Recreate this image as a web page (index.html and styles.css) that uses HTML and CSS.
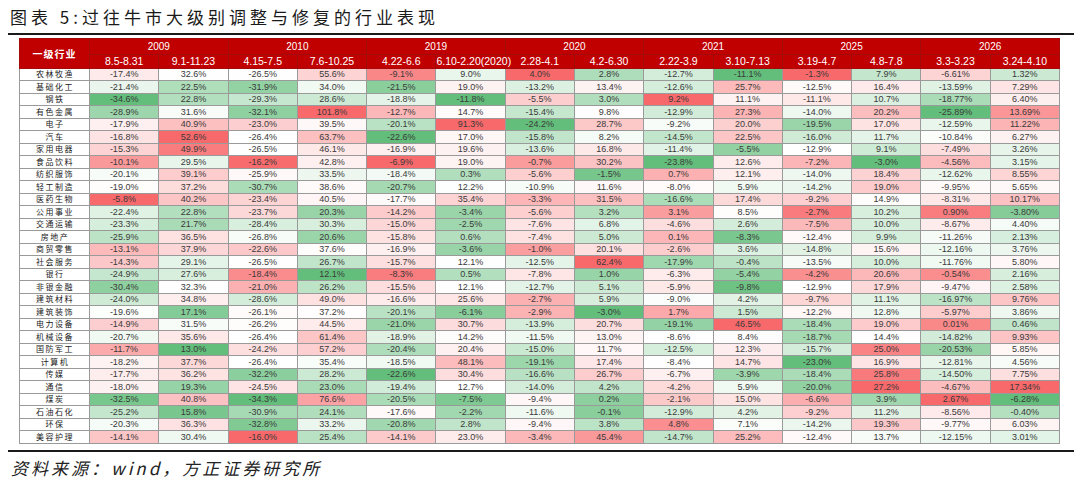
FILE: index.html
```html
<!DOCTYPE html>
<html lang="zh-CN">
<head>
<meta charset="utf-8">
<title>图表 5:过往牛市大级别调整与修复的行业表现</title>
<link rel="stylesheet" href="styles.css">
</head>
<body>
<div class="page">
  <h1 class="title">图表 5:过往牛市大级别调整与修复的行业表现</h1>
  <div class="rule"></div>
  <table class="perf">
    <colgroup>
      <col class="c-name">
      <col span="14">
    </colgroup>
    <thead>
      <tr class="h-year">
        <th rowspan="2" class="h-name">一级行业</th>
        <th colspan="2">2009</th>
        <th colspan="2">2010</th>
        <th colspan="2">2019</th>
        <th colspan="2">2020</th>
        <th colspan="2">2021</th>
        <th colspan="2">2025</th>
        <th colspan="2">2026</th>
      </tr>
      <tr class="h-range">
        <th>8.5-8.31</th><th>9.1-11.23</th><th>4.15-7.5</th><th>7.6-10.25</th>
        <th>4.22-6.6</th><th>6.10-2.20(2020)</th><th>2.28-4.1</th><th>4.2-6.30</th>
        <th>2.22-3.9</th><th>3.10-7.13</th><th>3.19-4.7</th><th>4.8-7.8</th>
        <th>3.3-3.23</th><th>3.24-4.10</th>
      </tr>
    </thead>
    <tbody>
      <tr><td>农林牧渔</td><td>-17.4%</td><td>32.6%</td><td>-26.5%</td><td>55.6%</td><td>-9.1%</td><td>9.0%</td><td>4.0%</td><td>2.8%</td><td>-12.7%</td><td>-11.1%</td><td>-1.3%</td><td>7.9%</td><td>-6.61%</td><td>1.32%</td></tr>
      <tr><td>基础化工</td><td>-21.4%</td><td>22.5%</td><td>-31.9%</td><td>34.0%</td><td>-21.5%</td><td>19.0%</td><td>-13.2%</td><td>13.4%</td><td>-12.6%</td><td>25.7%</td><td>-12.5%</td><td>16.4%</td><td>-13.59%</td><td>7.29%</td></tr>
      <tr><td>钢铁</td><td>-34.6%</td><td>22.8%</td><td>-29.3%</td><td>28.6%</td><td>-18.8%</td><td>-11.8%</td><td>-5.5%</td><td>3.0%</td><td>9.2%</td><td>11.1%</td><td>-11.1%</td><td>10.7%</td><td>-18.77%</td><td>6.40%</td></tr>
      <tr><td>有色金属</td><td>-28.9%</td><td>31.6%</td><td>-32.1%</td><td>101.8%</td><td>-12.7%</td><td>14.7%</td><td>-15.4%</td><td>9.8%</td><td>-12.9%</td><td>27.3%</td><td>-14.0%</td><td>20.2%</td><td>-25.89%</td><td>13.69%</td></tr>
      <tr><td>电子</td><td>-17.9%</td><td>40.9%</td><td>-23.0%</td><td>39.5%</td><td>-20.1%</td><td>91.3%</td><td>-24.2%</td><td>28.7%</td><td>-9.2%</td><td>20.0%</td><td>-19.5%</td><td>17.0%</td><td>-12.59%</td><td>11.22%</td></tr>
      <tr><td>汽车</td><td>-16.8%</td><td>52.6%</td><td>-26.4%</td><td>63.7%</td><td>-22.6%</td><td>17.0%</td><td>-15.8%</td><td>8.2%</td><td>-14.5%</td><td>22.5%</td><td>-16.0%</td><td>11.7%</td><td>-10.84%</td><td>6.27%</td></tr>
      <tr><td>家用电器</td><td>-15.3%</td><td>49.9%</td><td>-26.5%</td><td>46.1%</td><td>-16.9%</td><td>19.6%</td><td>-13.6%</td><td>16.8%</td><td>-11.4%</td><td>-5.5%</td><td>-12.9%</td><td>9.1%</td><td>-7.49%</td><td>3.26%</td></tr>
      <tr><td>食品饮料</td><td>-10.1%</td><td>29.5%</td><td>-16.2%</td><td>42.8%</td><td>-6.9%</td><td>19.0%</td><td>-0.7%</td><td>30.2%</td><td>-23.8%</td><td>12.6%</td><td>-7.2%</td><td>-3.0%</td><td>-4.56%</td><td>3.15%</td></tr>
      <tr><td>纺织服饰</td><td>-20.1%</td><td>39.1%</td><td>-25.9%</td><td>33.5%</td><td>-18.4%</td><td>0.3%</td><td>-5.6%</td><td>-1.5%</td><td>0.7%</td><td>12.1%</td><td>-14.0%</td><td>18.4%</td><td>-12.62%</td><td>8.55%</td></tr>
      <tr><td>轻工制造</td><td>-19.0%</td><td>37.2%</td><td>-30.7%</td><td>38.6%</td><td>-20.7%</td><td>12.2%</td><td>-10.9%</td><td>11.6%</td><td>-8.0%</td><td>5.9%</td><td>-14.2%</td><td>19.0%</td><td>-9.95%</td><td>5.65%</td></tr>
      <tr><td>医药生物</td><td>-5.8%</td><td>40.2%</td><td>-23.4%</td><td>40.5%</td><td>-17.7%</td><td>35.4%</td><td>-3.3%</td><td>31.5%</td><td>-16.6%</td><td>17.4%</td><td>-9.2%</td><td>14.9%</td><td>-8.31%</td><td>10.17%</td></tr>
      <tr><td>公用事业</td><td>-22.4%</td><td>22.8%</td><td>-23.7%</td><td>20.3%</td><td>-14.2%</td><td>-3.4%</td><td>-5.6%</td><td>3.2%</td><td>3.1%</td><td>8.5%</td><td>-2.7%</td><td>10.2%</td><td>0.90%</td><td>-3.80%</td></tr>
      <tr><td>交通运输</td><td>-23.3%</td><td>21.7%</td><td>-28.4%</td><td>30.3%</td><td>-15.0%</td><td>-2.5%</td><td>-7.6%</td><td>6.8%</td><td>-4.6%</td><td>2.6%</td><td>-7.5%</td><td>10.0%</td><td>-8.67%</td><td>4.40%</td></tr>
      <tr><td>房地产</td><td>-25.9%</td><td>36.5%</td><td>-26.8%</td><td>20.6%</td><td>-15.8%</td><td>0.6%</td><td>-7.4%</td><td>5.0%</td><td>0.1%</td><td>-8.3%</td><td>-12.4%</td><td>9.9%</td><td>-11.26%</td><td>2.13%</td></tr>
      <tr><td>商贸零售</td><td>-13.1%</td><td>37.9%</td><td>-22.6%</td><td>37.6%</td><td>-16.9%</td><td>-3.6%</td><td>-1.0%</td><td>20.1%</td><td>-2.6%</td><td>3.6%</td><td>-14.8%</td><td>15.6%</td><td>-12.16%</td><td>3.76%</td></tr>
      <tr><td>社会服务</td><td>-14.3%</td><td>29.1%</td><td>-26.5%</td><td>26.7%</td><td>-15.7%</td><td>12.1%</td><td>-12.5%</td><td>62.4%</td><td>-17.9%</td><td>-0.4%</td><td>-13.5%</td><td>10.0%</td><td>-11.76%</td><td>5.80%</td></tr>
      <tr><td>银行</td><td>-24.9%</td><td>27.6%</td><td>-18.4%</td><td>12.1%</td><td>-8.3%</td><td>0.5%</td><td>-7.8%</td><td>1.0%</td><td>-6.3%</td><td>-5.4%</td><td>-4.2%</td><td>20.6%</td><td>-0.54%</td><td>2.16%</td></tr>
      <tr><td>非银金融</td><td>-30.4%</td><td>32.3%</td><td>-21.0%</td><td>26.2%</td><td>-15.5%</td><td>12.1%</td><td>-12.7%</td><td>5.1%</td><td>-5.9%</td><td>-9.8%</td><td>-12.9%</td><td>17.9%</td><td>-9.47%</td><td>2.58%</td></tr>
      <tr><td>建筑材料</td><td>-24.0%</td><td>34.8%</td><td>-28.6%</td><td>49.0%</td><td>-16.6%</td><td>25.6%</td><td>-2.7%</td><td>5.9%</td><td>-9.0%</td><td>4.2%</td><td>-9.7%</td><td>11.1%</td><td>-16.97%</td><td>9.76%</td></tr>
      <tr><td>建筑装饰</td><td>-19.6%</td><td>17.1%</td><td>-26.1%</td><td>37.2%</td><td>-20.1%</td><td>-6.1%</td><td>-2.9%</td><td>-3.0%</td><td>1.7%</td><td>1.5%</td><td>-12.2%</td><td>12.8%</td><td>-5.97%</td><td>3.86%</td></tr>
      <tr><td>电力设备</td><td>-14.9%</td><td>31.5%</td><td>-26.2%</td><td>44.5%</td><td>-21.0%</td><td>30.7%</td><td>-13.9%</td><td>20.7%</td><td>-19.1%</td><td>46.5%</td><td>-18.4%</td><td>19.0%</td><td>0.01%</td><td>0.46%</td></tr>
      <tr><td>机械设备</td><td>-20.7%</td><td>35.6%</td><td>-26.4%</td><td>61.4%</td><td>-18.9%</td><td>14.2%</td><td>-11.5%</td><td>13.0%</td><td>-8.6%</td><td>8.4%</td><td>-18.7%</td><td>14.4%</td><td>-14.82%</td><td>9.93%</td></tr>
      <tr><td>国防军工</td><td>-11.7%</td><td>13.0%</td><td>-24.2%</td><td>57.2%</td><td>-20.4%</td><td>20.4%</td><td>-15.0%</td><td>11.7%</td><td>-12.5%</td><td>12.3%</td><td>-15.7%</td><td>25.0%</td><td>-20.53%</td><td>5.85%</td></tr>
      <tr><td>计算机</td><td>-18.2%</td><td>37.7%</td><td>-26.4%</td><td>35.4%</td><td>-18.5%</td><td>48.1%</td><td>-19.1%</td><td>17.4%</td><td>-8.4%</td><td>14.7%</td><td>-23.0%</td><td>16.9%</td><td>-12.81%</td><td>4.56%</td></tr>
      <tr><td>传媒</td><td>-17.7%</td><td>36.2%</td><td>-32.2%</td><td>28.2%</td><td>-22.6%</td><td>30.4%</td><td>-16.6%</td><td>26.7%</td><td>-6.7%</td><td>-3.9%</td><td>-18.4%</td><td>25.8%</td><td>-14.50%</td><td>7.75%</td></tr>
      <tr><td>通信</td><td>-18.0%</td><td>19.3%</td><td>-24.5%</td><td>23.0%</td><td>-19.4%</td><td>12.7%</td><td>-14.0%</td><td>4.2%</td><td>-4.2%</td><td>5.9%</td><td>-20.0%</td><td>27.2%</td><td>-4.67%</td><td>17.34%</td></tr>
      <tr><td>煤炭</td><td>-32.5%</td><td>40.8%</td><td>-34.3%</td><td>76.6%</td><td>-20.5%</td><td>-7.5%</td><td>-9.4%</td><td>0.2%</td><td>-2.1%</td><td>15.0%</td><td>-6.6%</td><td>3.9%</td><td>2.67%</td><td>-6.28%</td></tr>
      <tr><td>石油石化</td><td>-25.2%</td><td>15.8%</td><td>-30.9%</td><td>24.1%</td><td>-17.6%</td><td>-2.2%</td><td>-11.6%</td><td>-0.1%</td><td>-12.9%</td><td>4.2%</td><td>-9.2%</td><td>11.2%</td><td>-8.56%</td><td>-0.40%</td></tr>
      <tr><td>环保</td><td>-20.3%</td><td>36.3%</td><td>-32.8%</td><td>33.2%</td><td>-20.8%</td><td>2.8%</td><td>-9.4%</td><td>3.8%</td><td>4.8%</td><td>7.1%</td><td>-14.2%</td><td>19.3%</td><td>-9.77%</td><td>6.03%</td></tr>
      <tr><td>美容护理</td><td>-14.1%</td><td>30.4%</td><td>-16.0%</td><td>25.4%</td><td>-14.1%</td><td>23.0%</td><td>-3.4%</td><td>45.4%</td><td>-14.7%</td><td>25.2%</td><td>-12.4%</td><td>13.7%</td><td>-12.15%</td><td>3.01%</td></tr>
    </tbody>
  </table>
  <div class="rule rule-bottom"></div>
  <p class="source">资料来源：wind，方正证券研究所</p>
</div>
<script src="script.js"></script>
</body>
</html>
```

FILE: styles.css
```css
* { box-sizing: border-box; }
html, body { margin: 0; padding: 0; background: #fff; }
body {
  width: 1080px;
  height: 483px;
  overflow: hidden;
  font-family: "Liberation Sans", "Noto Sans CJK SC", sans-serif;
}
.page { display: flex; flex-direction: column; }
.title {
  margin: 0;
  padding-left: 10px;
  height: 33px;
  line-height: 33px;
  font-family: "Noto Sans CJK SC", sans-serif;
  font-weight: 400;
  font-size: 17px;
  letter-spacing: 4px;
  color: #1a1a1a;
  white-space: nowrap;
}
.rule {
  margin: 0 6px 0 8px;
  height: 2px;
  background: #1a1a1a;
}
.perf {
  margin: 2.5px 0 0 19px;
  width: 1041px;
  table-layout: fixed;
  border-collapse: collapse;
  border: 1px solid #666;
  font-size: 9px;
  color: #3a3a3a;
}
.perf .c-name { width: 70px; }
.perf th {
  background: #c00000;
  color: #fff;
  font-weight: 400;
  border: 1px solid #a30a0a;
  padding: 0;
  text-align: center;
  white-space: nowrap;
}
.perf .h-year { height: 16px; }
.perf .h-year th { font-size: 10px; }
.perf .h-range { height: 14px; }
.perf .h-range th { font-size: 10.5px; }
.perf .h-name {
  font-family: "Noto Sans CJK SC", sans-serif;
  font-weight: 700;
  font-size: 8.5px;
  letter-spacing: 1px;
}
.perf tbody tr { height: 12.5px; }
.perf td {
  border: 1px solid #9a9a9a;
  padding: 0;
  text-align: center;
  line-height: 10px;
  white-space: nowrap;
  background: #fff;
}
.perf td:first-child {
  font-family: "Noto Sans CJK SC", sans-serif;
  font-size: 8px;
  letter-spacing: 1.5px;
  color: #222;
  padding-left: 1px;
}
.rule-bottom { margin-top: 6.5px; }
.source {
  margin: 0;
  padding-left: 11px;
  height: 32px;
  line-height: 32px;
  font-family: "Noto Sans CJK SC", sans-serif;
  font-style: italic;
  font-size: 17px;
  letter-spacing: 3px;
  color: #222;
  white-space: nowrap;
}
```

FILE: script.js
```js
(function () {
  var G = [99, 190, 123], W = [255, 255, 255], R = [248, 105, 107];
  function mix(a, b, f) {
    f = Math.max(0, Math.min(1, f));
    return 'rgb(' + a.map(function (x, i) { return Math.round(x + (b[i] - x) * f); }).join(',') + ')';
  }
  var table = document.querySelector('table.perf');
  var rows = Array.prototype.slice.call(table.tBodies[0].rows);
  var n = rows[0].cells.length;
  for (var c = 1; c < n; c++) {
    var cells = rows.map(function (r) { return r.cells[c]; });
    var vals = cells.map(function (td) { return parseFloat(td.textContent); });
    var s = vals.slice().sort(function (a, b) { return a - b; });
    var min = s[0], max = s[s.length - 1];
    var k = (s.length - 1) * 0.5, lo = Math.floor(k), hi = Math.ceil(k);
    var mid = s[lo] + (s[hi] - s[lo]) * (k - lo);
    cells.forEach(function (td, i) {
      var v = vals[i], col;
      if (v <= mid) col = mix(G, W, mid === min ? 1 : (v - min) / (mid - min));
      else col = mix(W, R, (v - mid) / (max - mid));
      td.style.backgroundColor = col;
    });
  }
})();
```
